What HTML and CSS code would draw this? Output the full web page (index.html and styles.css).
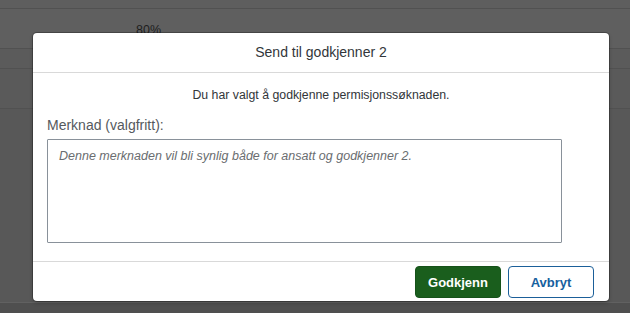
FILE: index.html
```html
<!DOCTYPE html>
<html lang="no">
<head>
  <meta charset="UTF-8" />
  <title>Send til godkjenner 2</title>
  <meta name="viewport" content="width=device-width, initial-scale=1.0" />
  <link rel="stylesheet" href="styles.css">
</head>
<body>
  <div class="page">
    <div class="row row-top"></div>
    <div class="row row-value"><span class="cell">80%</span></div>
    <div class="row row-small"></div>
    <div class="row row-mid"></div>
    <div class="row row-rest"></div>
    <div class="row row-bottom"></div>
  </div>

  <div class="dialog">
    <div class="dialog-header">Send til godkjenner 2</div>

    <div class="dialog-body">
      <p class="info">Du har valgt å godkjenne permisjonssøknaden.</p>
      <label for="note">Merknad (valgfritt):</label>
      <textarea id="note" placeholder="Denne merknaden vil bli synlig både for ansatt og godkjenner 2."></textarea>
    </div>

    <div class="dialog-footer">
      <button class="btn btn-approve">Godkjenn</button>
      <button class="btn btn-cancel">Avbryt</button>
    </div>
  </div>
</body>
</html>
```

FILE: styles.css
```css
* {
  box-sizing: border-box;
}

html, body {
  margin: 0;
  padding: 0;
  overflow: hidden;
}

body {
  font-family: 'Liberation Sans', Arial, sans-serif;
  background: #595959;
  width: 630px;
  height: 313px;
  position: relative;
}

.page {
  display: flex;
  flex-direction: column;
  height: 313px;
}

.row {
  border-bottom: 1px solid #515151;
}

.row-top {
  height: 9px;
  background: #5e5e5e;
}

.row-value {
  height: 40px;
  background: #5f5f5f;
  position: relative;
}

.cell {
  position: absolute;
  left: 136px;
  top: 14px;
  font-size: 12.5px;
  color: #1e1e1e;
}

.row-small {
  height: 20px;
  background: #5b5b5b;
}

.row-mid {
  height: 40px;
  background: #5a5a5a;
}

.row-rest {
  flex: 1;
  background: #585858;
  border-bottom: 1px solid #616161;
}

.row-bottom {
  height: 10px;
  background: #4f4f4f;
  border-bottom: none;
}

.dialog {
  position: absolute;
  left: 33px;
  top: 33px;
  width: 576px;
  height: 268px;
  background: #fff;
  border-radius: 4px;
  box-shadow: 0 0 0 1px rgba(0,0,0,0.25), 0 2px 4px rgba(0,0,0,0.2);
  display: flex;
  flex-direction: column;
}

.dialog-header {
  height: 40px;
  border-bottom: 1px solid #d9d9d9;
  display: flex;
  align-items: center;
  justify-content: center;
  font-size: 14px;
  color: #32363a;
  padding-bottom: 2px;
}

.dialog-body {
  flex: 1;
  padding: 0 14px;
}

.info {
  margin: 15px 0 0;
  text-align: center;
  font-size: 12.3px;
  color: #32363a;
}

label {
  display: block;
  margin: 15px 0 0;
  font-size: 14px;
  color: #55595d;
}

textarea {
  display: block;
  margin-top: 6px;
  width: 515px;
  height: 104px;
  border: 1px solid #89919a;
  border-radius: 1px;
  padding: 9px 11px;
  font-family: inherit;
  font-size: 12.5px;
  resize: none;
}

textarea::placeholder {
  color: #6a6d70;
  font-style: italic;
}

.dialog-footer {
  height: 40px;
  border-top: 1px solid #d9d9d9;
  display: flex;
  justify-content: flex-end;
  align-items: flex-start;
  gap: 7px;
  padding: 4px 15px 0;
}

.btn {
  width: 86px;
  height: 32px;
  border-radius: 4px;
  font-family: inherit;
  font-size: 13px;
  font-weight: bold;
  cursor: pointer;
}

.btn-approve {
  background: #1a5e1d;
  border: 1px solid #16521a;
  color: #fff;
}

.btn-cancel {
  background: #fff;
  border: 1px solid #1b5f99;
  color: #17609e;
}
```
